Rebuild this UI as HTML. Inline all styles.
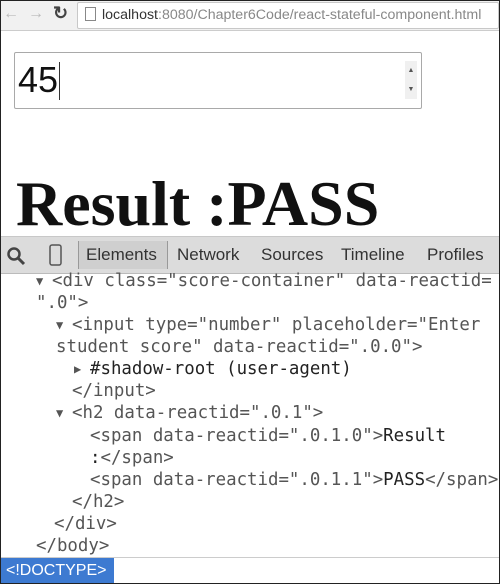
<!DOCTYPE html>
<html><head><style>
body{margin:0;width:500px;height:584px;overflow:hidden;position:relative;background:#fff;font-family:"Liberation Sans",sans-serif}
.frame{position:absolute;left:0;top:0;width:498px;height:582px;border:1px solid #222;pointer-events:none}
.top{position:absolute;left:0;top:0;width:500px;height:30px;background:#f1f1f1;border-bottom:1px solid #ccc}
.url{position:absolute;left:77px;top:2px;width:420px;height:25px;background:#fff;border:1px solid #c8c8c8;border-radius:2px;font-size:14.2px;line-height:25px;color:#888;white-space:nowrap}
.inp{position:absolute;left:14px;top:52px;width:406px;height:55px;border:1px solid #a9a9a9;border-radius:2px}
.res{position:absolute;left:16px;top:168px;font-family:"Liberation Serif",serif;font-weight:bold;font-size:64px;line-height:72px;color:#111}
.tb{position:absolute;left:0;top:236px;width:500px;height:36px;background:#dcdcdc;border-top:1px solid #c8c8c8;border-bottom:1px solid #bbb;font-size:17px;color:#333;line-height:36px}
.tb span{position:absolute;top:0}
.code{position:absolute;left:0;top:270px;font-family:"DejaVu Sans Mono",monospace;font-size:17.4px;line-height:22px;color:#555;white-space:pre}
.l{position:absolute;white-space:pre}
.d{color:#222}
.tri{position:absolute;left:-16px;top:0;font-size:12px;color:#555}
.bot{position:absolute;left:0;top:557px;width:500px;height:27px;border-top:1px solid #ccc;background:#fff}
.doc{position:absolute;left:0;top:558px;width:114px;height:26px;background:#3d7ad1;color:#fff;font-size:16px;line-height:26px;padding-left:6px;box-sizing:border-box}
</style></head><body>
<div class="top">
<span style="position:absolute;left:3px;top:5px;color:#bbb;font-size:16px">&#8592;</span>
<span style="position:absolute;left:28px;top:5px;color:#bbb;font-size:16px">&#8594;</span>
<span style="position:absolute;left:53px;top:3px;color:#444;font-size:18px;font-weight:bold">&#8635;</span>
<div class="url"><span style="display:inline-block;width:9px;height:12px;border:1px solid #888;margin:0 6px 0 7px;vertical-align:-2px"></span><span style="color:#333">localhost</span>:8080/Chapter6Code/react-stateful-component.html</div>
</div>
<div class="inp"><span style="position:absolute;left:3px;top:5px;font-size:36px;line-height:44px;color:#111">45</span><span style="position:absolute;left:44px;top:9px;width:1px;height:38px;background:#333"></span>
<div style="position:absolute;right:4px;top:8px;width:12px;height:38px;background:#f0f0f0;font-size:7px;color:#555;text-align:center;line-height:19px">&#9650;<br>&#9660;</div></div>
<div class="res">Result :PASS</div>
<div class="tb">
<svg style="position:absolute;left:6px;top:9px" width="20" height="20"><circle cx="8" cy="8" r="5.5" fill="none" stroke="#444" stroke-width="2.5"/><line x1="12" y1="12" x2="18" y2="18" stroke="#444" stroke-width="3"/></svg>
<svg style="position:absolute;left:49px;top:7px" width="14" height="23"><rect x="1" y="1" width="11" height="20" rx="2" fill="none" stroke="#555" stroke-width="1.5"/></svg>
<div style="position:absolute;left:78px;top:4px;width:88px;height:28px;background:#cfcfcf;border-left:1px solid #999;border-right:1px solid #999"></div>
<span style="left:86px">Elements</span><span style="left:177px">Network</span><span style="left:261px">Sources</span><span style="left:341px">Timeline</span><span style="left:427px">Profiles</span>
</div>
<div class="code">
<div class="l" style="left:52px;top:0"><span class="tri">&#9660;</span>&lt;div class="score-container" data-reactid=</div>
<div class="l" style="left:36px;top:22px">".0"&gt;</div>
<div class="l" style="left:72px;top:44px"><span class="tri">&#9660;</span>&lt;input type="number" placeholder="Enter</div>
<div class="l" style="left:56px;top:66px">student score" data-reactid=".0.0"&gt;</div>
<div class="l" style="left:90px;top:88px"><span class="tri">&#9654;</span><span class="d">#shadow-root (user-agent)</span></div>
<div class="l" style="left:72px;top:110px">&lt;/input&gt;</div>
<div class="l" style="left:72px;top:132px"><span class="tri">&#9660;</span>&lt;h2 data-reactid=".0.1"&gt;</div>
<div class="l" style="left:90px;top:155px">&lt;span data-reactid=".0.1.0"&gt;<span class="d">Result</span></div>
<div class="l" style="left:90px;top:177px"><span class="d">:</span>&lt;/span&gt;</div>
<div class="l" style="left:90px;top:199px">&lt;span data-reactid=".0.1.1"&gt;<span class="d">PASS</span>&lt;/span&gt;</div>
<div class="l" style="left:72px;top:221px">&lt;/h2&gt;</div>
<div class="l" style="left:54px;top:243px">&lt;/div&gt;</div>
<div class="l" style="left:36px;top:265px">&lt;/body&gt;</div>
</div>
<div class="bot"></div>
<div class="doc">&lt;!DOCTYPE&gt;</div>
<div class="frame"></div>
</body></html>
